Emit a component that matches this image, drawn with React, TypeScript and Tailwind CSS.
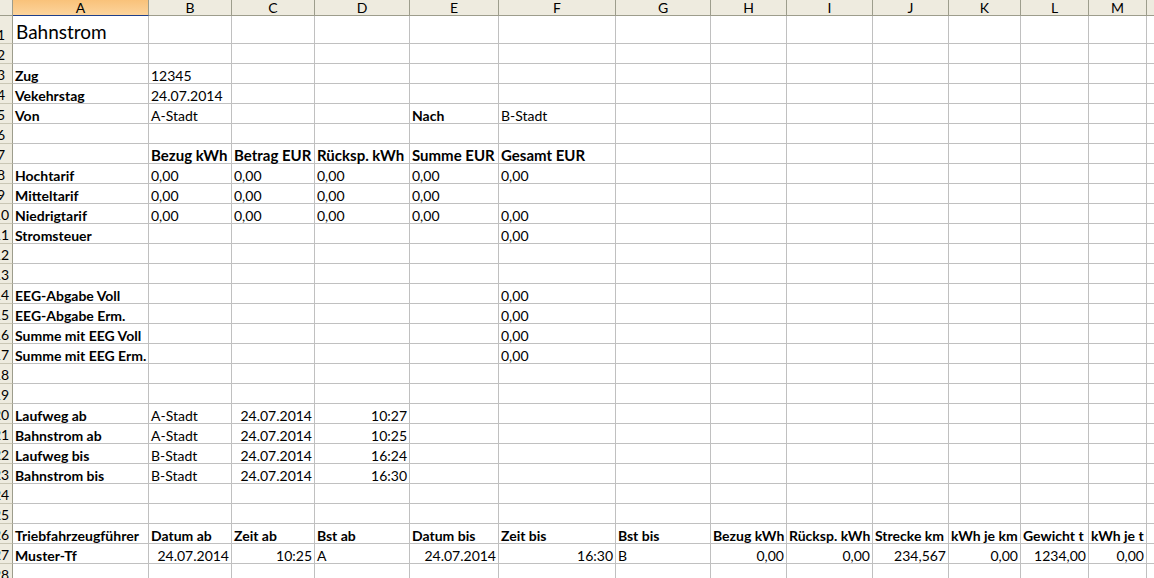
import React from "react";

type Cell = [string, string?];

const COLS = ["A", "B", "C", "D", "E", "F", "G", "H", "I", "J", "K", "L", "M", "N"];

// row number -> column letter -> [text, flags]  (b = bold, r = right, h = table head)
const DATA: Record<number, Record<string, Cell>> = {
  1: { A: ["Bahnstrom", "t"] },
  3: { A: ["Zug", "b"], B: ["12345"] },
  4: { A: ["Vekehrstag", "b"], B: ["24.07.2014"] },
  5: { A: ["Von", "b"], B: ["A-Stadt"], E: ["Nach", "b"], F: ["B-Stadt"] },
  7: {
    B: ["Bezug kWh", "h"],
    C: ["Betrag EUR", "h"],
    D: ["Rücksp. kWh", "h"],
    E: ["Summe EUR", "h"],
    F: ["Gesamt EUR", "h"],
  },
  8: { A: ["Hochtarif", "b"], B: ["0,00"], C: ["0,00"], D: ["0,00"], E: ["0,00"], F: ["0,00"] },
  9: { A: ["Mitteltarif", "b"], B: ["0,00"], C: ["0,00"], D: ["0,00"], E: ["0,00"] },
  10: { A: ["Niedrigtarif", "b"], B: ["0,00"], C: ["0,00"], D: ["0,00"], E: ["0,00"], F: ["0,00"] },
  11: { A: ["Stromsteuer", "b"], F: ["0,00"] },
  14: { A: ["EEG-Abgabe Voll", "b"], F: ["0,00"] },
  15: { A: ["EEG-Abgabe Erm.", "b"], F: ["0,00"] },
  16: { A: ["Summe mit EEG Voll", "b"], F: ["0,00"] },
  17: { A: ["Summe mit EEG Erm.", "b"], F: ["0,00"] },
  20: { A: ["Laufweg ab", "b"], B: ["A-Stadt"], C: ["24.07.2014", "r"], D: ["10:27", "r"] },
  21: { A: ["Bahnstrom ab", "b"], B: ["A-Stadt"], C: ["24.07.2014", "r"], D: ["10:25", "r"] },
  22: { A: ["Laufweg bis", "b"], B: ["B-Stadt"], C: ["24.07.2014", "r"], D: ["16:24", "r"] },
  23: { A: ["Bahnstrom bis", "b"], B: ["B-Stadt"], C: ["24.07.2014", "r"], D: ["16:30", "r"] },
  26: {
    A: ["Triebfahrzeugführer", "b"],
    B: ["Datum ab", "b"],
    C: ["Zeit ab", "b"],
    D: ["Bst ab", "b"],
    E: ["Datum bis", "b"],
    F: ["Zeit bis", "b"],
    G: ["Bst bis", "b"],
    H: ["Bezug kWh", "b"],
    I: ["Rücksp. kWh", "b"],
    J: ["Strecke km", "b"],
    K: ["kWh je km", "b"],
    L: ["Gewicht t", "b"],
    M: ["kWh je t", "b"],
  },
  27: {
    A: ["Muster-Tf", "b"],
    B: ["24.07.2014", "r"],
    C: ["10:25", "r"],
    D: ["A"],
    E: ["24.07.2014", "r"],
    F: ["16:30", "r"],
    G: ["B"],
    H: ["0,00", "r"],
    I: ["0,00", "r"],
    J: ["234,567", "r"],
    K: ["0,00", "r"],
    L: ["1234,00", "r"],
    M: ["0,00", "r"],
  },
};

const ROWS = Array.from({ length: 28 }, (_, i) => i + 1);

function RowHeader({ n, tall }: { n: number; tall?: boolean }) {
  return (
    <div
      className={`overflow-hidden bg-[#eeebdf] border-r border-b border-r-[#9d9d8c] border-b-[#c9c6b4] flex items-end ${
        tall ? "h-[28px]" : "h-[20px]"
      }`}
    >
      <div className="w-[22px] -ml-[10px] shrink-0 text-center text-[14px] leading-[17px] text-black">{n}</div>
    </div>
  );
}

function SheetCell({ cell, tall }: { cell?: Cell; tall?: boolean }) {
  const flags = cell?.[1] ?? "";
  const bold = flags.includes("b") || flags.includes("h");
  return (
    <div
      className={`relative border-r border-b border-[#c0c0c0] flex items-end px-[2px] ${
        tall ? "h-[28px]" : "h-[20px]"
      } ${flags.includes("r") ? "justify-end" : "justify-start"}`}
    >
      {cell && (
        <span
          className={`whitespace-nowrap text-black ${bold ? "font-bold" : "font-normal"} ${
            flags.includes("t")
              ? "text-[19px] leading-[22px] pl-[1px]"
              : flags.includes("h")
              ? "text-[15px] leading-[15px]"
              : "text-[14px] leading-[14px]"
          }`}
        >
          {cell[0]}
        </span>
      )}
    </div>
  );
}

export default function App() {
  return (
    <div className="w-[1154px] h-[578px] overflow-hidden bg-white font-['Lato',sans-serif]">
      <div className="grid grid-cols-[13px_136px_83px_83px_95px_89px_117px_95px_76px_86px_76px_72px_68px_58px_100px]">
        {/* column headers */}
        <div className="h-[16px] bg-[#eeebdf] border-r border-b border-[#9d9d8c]" />
        {COLS.map((c, i) => (
          <div
            key={c}
            className={`h-[16px] border-r border-b border-[#9d9d8c] flex items-center justify-center text-[14px] leading-[14px] text-black ${
              i === 0 ? "bg-gradient-to-b from-[#f9c27a] to-[#fcd49c] border-b-[#1f3f8a]" : "bg-[#eeebdf]"
            }`}
          >
            {c}
          </div>
        ))}

        {ROWS.map((n) => (
          <React.Fragment key={n}>
            <RowHeader n={n} tall={n === 1} />
            {COLS.map((c) => (
              <SheetCell key={c} cell={DATA[n]?.[c]} tall={n === 1} />
            ))}
          </React.Fragment>
        ))}
      </div>
    </div>
  );
}
